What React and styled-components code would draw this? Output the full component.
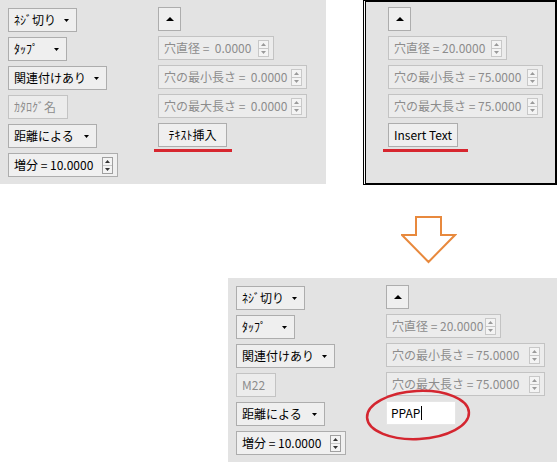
import styled, { createGlobalStyle } from "styled-components";

const GlobalStyle = createGlobalStyle`
  body {
    margin: 0;
    background: #ffffff;
    font-family: "Noto Sans CJK JP", "Noto Sans", sans-serif;
  }
`;

const Page = styled.div`
  width: 557px;
  height: 462px;
  display: flex;
  flex-direction: column;
  overflow: hidden;
`;

const TopRow = styled.div`
  display: flex;
  justify-content: space-between;
  align-items: flex-start;
`;

const Panel = styled.div`
  box-sizing: border-box;
  width: ${(p) => p.w}px;
  height: ${(p) => p.h}px;
  background: #e3e3e3;
  display: flex;
  padding: 7px 8px;
`;

const FramedPanel = styled(Panel)`
  border: 2px solid #000;
  border-left: 3px double #000;
  background-clip: padding-box;
  padding: 5px 0 0 22px;
`;

const Column = styled.div`
  display: flex;
  flex-direction: column;
  align-items: flex-start;
  gap: 5px;
  width: ${(p) => (p.w ? p.w + "px" : "auto")};
  padding-top: ${(p) => p.top || 0}px;
`;

const Widget = styled.div`
  box-sizing: border-box;
  position: relative;
  height: 24px;
  width: ${(p) => p.w}px;
  display: flex;
  align-items: center;
  font-size: 12px;
  line-height: 1;
  white-space: pre;
`;

const Button = styled(Widget)`
  background: #efefef;
  border: 1px solid #adadad;
  color: #000;
  padding: 0 5px;
  justify-content: ${(p) => (p.center ? "center" : "flex-start")};
`;

const Dropdown = styled(Button)`
  justify-content: space-between;
  padding: 0 7px 0 5px;
`;

const Field = styled(Widget)`
  background: #ececec;
  border: 1px solid #c3c3c3;
  color: #8c8c8c;
  padding: 0 4px 0 5px;
  justify-content: space-between;
`;

const EditField = styled(Widget)`
  background: #f0f0f0;
  border: 1px solid #adadad;
  color: #000;
  padding: 0 4px 0 5px;
  justify-content: space-between;
`;

const TextBox = styled(Widget)`
  background: #ffffff;
  border: 1px solid #e6e6e6;
  color: #000;
  padding: 0 4px;
`;

const Caret = styled.span`
  display: inline-block;
  width: 1px;
  height: 14px;
  background: #000;
  margin-left: 1px;
`;

const Spin = styled.div`
  box-sizing: border-box;
  width: 11px;
  height: 17px;
  display: flex;
  flex-direction: column;
  border: 1px solid ${(p) => (p.off ? "#c8c8c8" : "#a0a0a0")};
  background: #f4f4f4;
`;

const SpinHalf = styled.div`
  flex: 1;
  display: flex;
  align-items: center;
  justify-content: center;
  border-top: ${(p) => (p.lower ? "1px solid #c8c8c8" : "none")};
`;

const Tri = ({ down, color = "#000", w = 5, h = 3 }) => (
  <svg width={w} height={h} viewBox={`0 0 ${w} ${h}`}>
    <polygon
      points={down ? `0,0 ${w},0 ${w / 2},${h}` : `0,${h} ${w},${h} ${w / 2},0`}
      fill={color}
    />
  </svg>
);

const Spinner = ({ off }) => (
  <Spin off={off}>
    <SpinHalf>
      <Tri color={off ? "#9a9a9a" : "#333"} />
    </SpinHalf>
    <SpinHalf lower>
      <Tri down color={off ? "#9a9a9a" : "#333"} />
    </SpinHalf>
  </Spin>
);

const Underlined = styled.div`
  position: relative;
  &::after {
    content: "";
    position: absolute;
    left: ${(p) => p.l}px;
    right: ${(p) => p.r}px;
    bottom: -5px;
    height: 3px;
    background: #d7262f;
  }
`;

const Circled = styled.div`
  position: relative;
`;

const Ring = styled.svg`
  position: absolute;
  left: -21px;
  top: -13px;
  pointer-events: none;
`;

const ArrowRow = styled.div`
  display: flex;
  padding-left: 401px;
  margin-top: 30px;
`;

const BottomRow = styled.div`
  display: flex;
  justify-content: flex-end;
  margin-top: 13px;
`;

const DownArrow = () => (
  <svg width="56" height="50" viewBox="0 0 56 50">
    <path
      d="M15 2 H40 V20 H54 L27.5 47 L1 20 H15 Z"
      fill="none"
      stroke="#e8893d"
      strokeWidth="2"
      strokeLinejoin="miter"
    />
  </svg>
);

const DropButton = ({ w, children }) => (
  <Dropdown w={w}>
    <span>{children}</span>
    <Tri down />
  </Dropdown>
);

const UpButton = () => (
  <Button w={23} center>
    <Tri w={8} h={4} />
  </Button>
);

const SpinField = ({ w, children }) => (
  <Field w={w}>
    <span>{children}</span>
    <Spinner off />
  </Field>
);

const LeftColumn = ({ catalog }) => (
  <Column w={150} top={1}>
    <DropButton w={69}>ﾈｼﾞ切り</DropButton>
    <DropButton w={59}>ﾀｯﾌﾟ</DropButton>
    <DropButton w={99}>関連付けあり</DropButton>
    <Field w={catalog === "M22" ? 40 : 60}>{catalog}</Field>
    <DropButton w={89}>距離による</DropButton>
    <EditField w={110}>
      <span>増分 = 10.0000</span>
      <Spinner />
    </EditField>
  </Column>
);

export default function App() {
  return (
    <Page>
      <GlobalStyle />
      <TopRow>
        <Panel w={326} h={184}>
          <LeftColumn catalog="ｶﾀﾛｸﾞ名" />
          <Column>
            <UpButton />
            <SpinField w={116}>穴直径 =  0.0000</SpinField>
            <SpinField w={149}>穴の最小長さ =  0.0000</SpinField>
            <SpinField w={149}>穴の最大長さ =  0.0000</SpinField>
            <Underlined l={-4} r={-5}>
              <Button w={69} center>ﾃｷｽﾄ挿入</Button>
            </Underlined>
          </Column>
        </Panel>
        <FramedPanel w={194} h={185}>
          <Column>
            <UpButton />
            <SpinField w={119}>穴直径 = 20.0000</SpinField>
            <SpinField w={155}>穴の最小長さ = 75.0000</SpinField>
            <SpinField w={155}>穴の最大長さ = 75.0000</SpinField>
            <Underlined l={-5} r={-10}>
              <Button w={70} center>Insert Text</Button>
            </Underlined>
          </Column>
        </FramedPanel>
      </TopRow>
      <ArrowRow>
        <DownArrow />
      </ArrowRow>
      <BottomRow>
        <Panel w={329} h={187}>
          <LeftColumn catalog="M22" />
          <Column>
            <UpButton />
            <SpinField w={115}>穴直径 = 20.0000</SpinField>
            <SpinField w={159}>穴の最小長さ = 75.0000</SpinField>
            <SpinField w={159}>穴の最大長さ = 75.0000</SpinField>
            <Circled>
              <TextBox w={70}>
                PPAP
                <Caret />
              </TextBox>
              <Ring width="108" height="54" viewBox="0 0 108 54">
                <ellipse
                  cx="53"
                  cy="27"
                  rx="51"
                  ry="24"
                  transform="rotate(-3 53 27)"
                  fill="none"
                  stroke="#d42630"
                  strokeWidth="2.5"
                />
              </Ring>
            </Circled>
          </Column>
        </Panel>
      </BottomRow>
    </Page>
  );
}
